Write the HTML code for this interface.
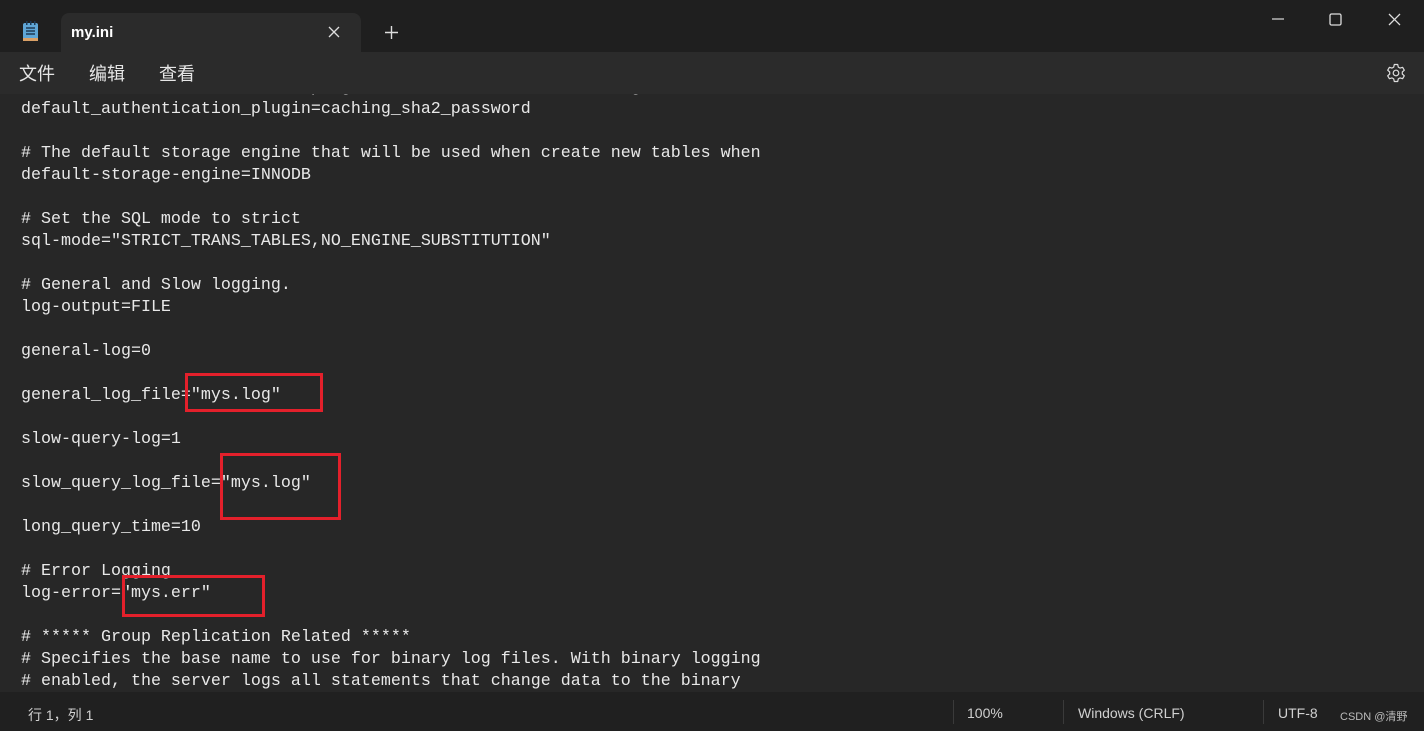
<!DOCTYPE html>
<html><head><meta charset="utf-8"><style>
*{margin:0;padding:0;box-sizing:border-box}
body{width:1424px;height:731px;background:#272727;overflow:hidden;position:relative;font-family:"Liberation Sans","Noto Sans CJK SC",sans-serif;color:#e6e6e6}
.title{position:absolute;left:0;top:0;width:1424px;height:52px;background:#1f1f1f}
.tab{position:absolute;left:61px;top:13px;width:300px;height:39px;background:#2b2b2b;border-radius:8px 8px 0 0}
.menu{position:absolute;left:0;top:52px;width:1424px;height:42px;background:#2b2b2b}
.ed{position:absolute;left:0;top:94px;width:1424px;height:598px;overflow:hidden;background:#272727}
pre{position:absolute;left:21px;top:-17px;font-family:"Liberation Mono",monospace;font-size:16.67px;line-height:22px;color:#e8e8e8}
.status{position:absolute;left:0;top:692px;width:1424px;height:39px;background:#202020;font-size:14px;color:#d0d0d0}
.status span{position:absolute;top:13px}
.sep{position:absolute;top:8px;width:1px;height:24px;background:#3a3a3a}
.box{position:absolute;border:3px solid #e3202b}
</style></head><body>
<div class="title">
 <svg style="position:absolute;left:22px;top:21px" width="18" height="22" viewBox="0 0 18 22"><rect x="1" y="2" width="15" height="18" rx="2" fill="#5fa6d6"/><rect x="1" y="17" width="15" height="3" fill="#d9a066"/><g stroke="#1e3a55" stroke-width="1.5"><line x1="4" y1="7" x2="13" y2="7"/><line x1="4" y1="10" x2="13" y2="10"/><line x1="4" y1="13" x2="13" y2="13"/></g><g fill="#1e3a55"><rect x="4" y="0" width="1.5" height="4"/><rect x="8" y="0" width="1.5" height="4"/><rect x="12" y="0" width="1.5" height="4"/></g></svg>
 <div class="tab"></div>
 <div style="position:absolute;left:71px;top:24px;font-size:15px;font-weight:bold;color:#fff">my.ini</div>
 <svg style="position:absolute;left:328px;top:26px" width="12" height="12"><path d="M1 1L11 11M11 1L1 11" stroke="#ddd" stroke-width="1.3"/></svg>
 <svg style="position:absolute;left:385px;top:26px" width="13" height="13"><path d="M6.5 0V13M0 6.5H13" stroke="#ddd" stroke-width="1.4"/></svg>
 <svg style="position:absolute;left:1272px;top:18px" width="12" height="2"><path d="M0 1H12" stroke="#ddd" stroke-width="1.2"/></svg>
 <svg style="position:absolute;left:1329px;top:13px" width="13" height="13"><rect x="1" y="1" width="11" height="11" rx="1.5" fill="none" stroke="#ddd" stroke-width="1.3"/></svg>
 <svg style="position:absolute;left:1388px;top:13px" width="13" height="13"><path d="M1 1L12 12M12 1L1 12" stroke="#ddd" stroke-width="1.3"/></svg>
</div>
<div class="menu">
 <span style="position:absolute;left:19px;top:8px;font-size:18px">文件</span>
 <span style="position:absolute;left:89px;top:8px;font-size:18px">编辑</span>
 <span style="position:absolute;left:159px;top:8px;font-size:18px">查看</span>
 <svg style="position:absolute;left:1386px;top:11px" width="20" height="20" viewBox="0 0 20 20"><path d="M8.3 1.5h3.4l.6 2.6 1.8 1 2.5-.8 1.7 2.9-2 1.8v2l2 1.8-1.7 2.9-2.5-.8-1.8 1-.6 2.6H8.3l-.6-2.6-1.8-1-2.5.8-1.7-2.9 2-1.8V9l-2-1.8 1.7-2.9 2.5.8 1.8-1z" fill="none" stroke="#ddd" stroke-width="1.2" stroke-linejoin="round"/><circle cx="10" cy="10" r="2.8" fill="none" stroke="#ddd" stroke-width="1.2"/></svg>
</div>
<div class="ed"><pre># The default authentication plugin to be used when connecting to the server
default_authentication_plugin=caching_sha2_password

# The default storage engine that will be used when create new tables when
default-storage-engine=INNODB

# Set the SQL mode to strict
sql-mode="STRICT_TRANS_TABLES,NO_ENGINE_SUBSTITUTION"

# General and Slow logging.
log-output=FILE

general-log=0

general_log_file="mys.log"

slow-query-log=1

slow_query_log_file="mys.log"

long_query_time=10

# Error Logging
log-error="mys.err"

# ***** Group Replication Related *****
# Specifies the base name to use for binary log files. With binary logging
# enabled, the server logs all statements that change data to the binary
log
</pre></div>
<div class="box" style="left:185px;top:373px;width:138px;height:39px"></div>
<div class="box" style="left:220px;top:453px;width:121px;height:67px"></div>
<div class="box" style="left:122px;top:575px;width:143px;height:42px"></div>
<div class="status">
 <span style="left:28px">行 1，列 1</span>
 <div class="sep" style="left:953px"></div>
 <span style="left:967px">100%</span>
 <div class="sep" style="left:1063px"></div>
 <span style="left:1078px">Windows (CRLF)</span>
 <div class="sep" style="left:1263px"></div>
 <span style="left:1278px">UTF-8</span>
 <span style="left:1340px;top:16px;font-size:11px;color:#bbb">CSDN @清野</span>
</div>
</body></html>
